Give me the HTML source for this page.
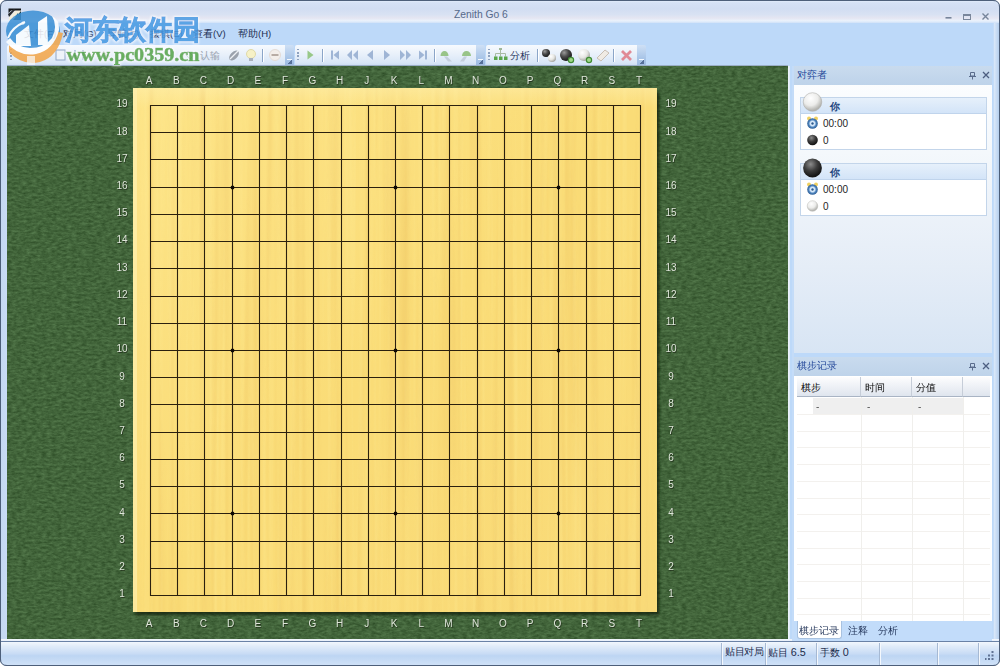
<!DOCTYPE html>
<html><head><meta charset="utf-8">
<style>
*{margin:0;padding:0;box-sizing:border-box}
html,body{width:1000px;height:666px;overflow:hidden;background:#c4dbf6;font-family:"Liberation Sans",sans-serif}
.a{position:absolute}
#frame{position:absolute;left:0;top:0;width:1000px;height:666px;background:#bdd9f9}
#title{position:absolute;left:1px;top:1px;width:998px;height:22px;background:linear-gradient(#e0ebfa 0,#d5e1f5 8%,#d1ddf2 35%,#d9e2f3 62%,#e5e6f2 78%,#eaf2fc 90%,#cfe1f8 100%)}
#title .t{position:absolute;left:453px;top:8px;font-size:10.3px;color:#56698a}
#menu{position:absolute;left:1px;top:23px;width:998px;height:22px;background:#bdd9f9}
#menu span{position:absolute;top:5px;font-size:9.5px;color:#1c2e52;font-weight:500}
.bar{position:absolute;top:45px;height:21px;background:linear-gradient(#f7fafe,#e8f0fa 45%,#d8e6f7 85%,#c9daf0);border-radius:2px 0 0 2px}
.ovf{position:absolute;top:45px;width:9px;height:21px;background:linear-gradient(#cfe0f5,#aac6e8 60%,#9dbbe2);border-radius:0 2px 2px 0}
.ovf:after{content:"";position:absolute;left:2px;top:14px;width:5px;height:4px;border-top:1px solid #f4f8fd;background:linear-gradient(135deg,transparent 50%,#56709a 50%)}
.grip{position:absolute;top:49px;width:2px;height:12px;background:repeating-linear-gradient(#8ea2c0 0 1.5px,transparent 1.5px 3.2px)}
.tsep{position:absolute;top:49px;width:1px;height:13px;background:#8ba5c8;box-shadow:1px 0 0 #fff}
#green{position:absolute;left:7px;top:66px;width:781px;height:573px;box-shadow:inset 0 2px 2px rgba(170,200,160,0.25);background:#4b7441;overflow:hidden}
#status{position:absolute;left:1px;top:641px;width:998px;height:24px;background:linear-gradient(#f2f7fd 0,#dfebf9 20%,#c9dcf5 50%,#bdd5f3 60%,#cfe1f7 100%);border-top:1px solid #6a82a6}
#status span{position:absolute;top:4px;font-size:9.8px;color:#1c2c4c;font-weight:500}
.sep{position:absolute;top:1px;width:2px;height:22px;background:linear-gradient(90deg,#a6b9d3 0 1px,#f4f8fd 1px 2px)}
#p1{position:absolute;left:794px;top:66px;width:198px;height:287px;background:linear-gradient(#fdfeff 0,#f4f8fc 30%,#e5edf7 70%,#d8e5f4 100%)}
.phead{position:absolute;left:0;top:0;width:198px;height:19px;background:linear-gradient(#c9dbee,#bed3ea)}
.phead .t{position:absolute;left:3px;top:3px;font-size:9.5px;color:#24489a;font-weight:500}
.pin{position:absolute;top:6px;left:176px}
.card{position:absolute;left:6px;width:187px;height:53px;border:1px solid #c3d5ea;background:#fff}
.card .h{position:absolute;left:0;top:0;width:185px;height:16px;background:linear-gradient(#e6f0fb,#d3e4f8);border-bottom:1px solid #c0d4ec}
.card .n{position:absolute;left:29px;top:3px;font-size:9.8px;font-weight:bold;color:#23467e}
.card .r{position:absolute;left:22px;font-size:10px;color:#1e1e1e}
#p2{position:absolute;left:794px;top:357px;width:198px;height:283px;background:#fff}
#tbl{position:absolute;left:3px;top:20px;width:193px;height:244px;background:#fff;overflow:hidden}
.th{position:absolute;top:0;height:20px;background:linear-gradient(#fdfdfe,#eef1f6 50%,#dfe5ee);border-bottom:1px solid #a9b4c4;border-right:1px solid #c6cdd8;font-size:9.5px;color:#0a0a0a;padding:5px 0 0 4px;font-weight:500}
.vl{position:absolute;top:20px;width:1px;height:230px;background:#f0efec}
.hl{position:absolute;left:0;width:193px;height:1px;background:#f3f1ee}
#tabs{position:absolute;left:0;top:264px;width:198px;height:20px;background:#c2dcfa}
#tabs span{position:absolute;top:4px;font-size:9.8px;color:#1f3156;font-weight:500}
</style></head><body>
<div id="frame">
  <div id="title"><span class="t">Zenith Go 6</span>
    <svg class="a" style="left:938px;top:9px" width="60" height="12">
      <rect x="6.5" y="7" width="6" height="1.6" fill="#76849a"/>
      <rect x="24.5" y="4.5" width="7" height="5" fill="none" stroke="#7a879c" stroke-width="1"/>
      <rect x="24" y="4" width="8" height="2" fill="#7a879c"/>
      <path d="M43.5 3.5 L49.5 9.5 M49.5 3.5 L43.5 9.5" stroke="#76849a" stroke-width="1.4"/>
    </svg>
  </div>
  <div id="menu">
    <span style="left:23px">文件(F)</span>
    <span style="left:62px">对局(G)</span>
    <span style="left:106px">导航(T)</span>
    <span style="left:149px">摆棋(E)</span>
    <span style="left:192px">查看(V)</span>
    <span style="left:237px">帮助(H)</span>
  </div>
  <!-- toolbars -->
  <div class="bar" style="left:7px;width:279px"></div><div class="ovf" style="left:285px"></div>
  <div class="bar" style="left:295px;width:181px"></div><div class="ovf" style="left:476px"></div>
  <div class="bar" style="left:486px;width:151px"></div><div class="ovf" style="left:637px"></div>
  <div class="grip" style="left:10px"></div>
  <div class="grip" style="left:297px"></div>
  <div class="grip" style="left:488px"></div>
  <div class="tsep" style="left:262px"></div>
  <div class="tsep" style="left:322px"></div>
  <div class="tsep" style="left:434px"></div>
  <div class="tsep" style="left:537px"></div>
  <div class="tsep" style="left:613px"></div>
  <svg class="a" style="left:0;top:44px" width="660" height="22">
    <defs>
      <radialGradient id="gb" cx="35%" cy="30%" r="70%"><stop offset="0" stop-color="#9a9a9a"/><stop offset="0.5" stop-color="#4a4a4a"/><stop offset="1" stop-color="#1a1a1a"/></radialGradient>
      <radialGradient id="gw" cx="35%" cy="30%" r="70%"><stop offset="0" stop-color="#ffffff"/><stop offset="0.6" stop-color="#e6e6e2"/><stop offset="1" stop-color="#a8a8a4"/></radialGradient>
    </defs>
    <!-- tb1 icons (faint, partly behind watermark) -->
    <rect x="56" y="6" width="9" height="10" fill="#eef3fa" stroke="#8fa6c6"/>
    <path d="M75 6v10 M83 6v10" stroke="#9aaecb" stroke-width="1.5"/>
    <path d="M103 8 l6 5" stroke="#9db39a" stroke-width="2"/>
    <text x="200" y="15" font-size="9.5" fill="#9aa3b0">认输</text>
    <path d="M188 7 l5 5 l-3 3 l-5 -5z" fill="none" stroke="#b9c2cc"/>
    <ellipse cx="234" cy="11.5" rx="3.5" ry="6" transform="rotate(45 234 11.5)" fill="#9aa2ad"/>
    <path d="M230 15 l8 -8" stroke="#eef1f5" stroke-width="1.2"/>
    <circle cx="251" cy="10" r="4.5" fill="#f6f1c6" stroke="#e0d9a8"/>
    <rect x="249" y="14" width="4" height="3" fill="#a9b1bd"/>
    <circle cx="275" cy="11" r="5.5" fill="#f3eeea" stroke="#e4dcd6"/>
    <rect x="271.5" y="10" width="7" height="2" fill="#b8aca4"/>
    <!-- tb2 -->
    <path d="M307.5 6.5 L313.5 11 L307.5 15.5 Z" fill="#98c888"/>
    <path d="M332 6.5v9" stroke="#9fb5d5" stroke-width="2"/><path d="M339 6.5 L333.5 11 L339 15.5 Z" fill="#9fb5d5"/>
    <path d="M352 6 L347 11 L352 16 Z M358 6 L353 11 L358 16 Z" fill="#9fb5d5"/>
    <path d="M373 6 L367 11 L373 16 Z" fill="#9fb5d5"/>
    <path d="M384 6 L390 11 L384 16 Z" fill="#9fb5d5"/>
    <path d="M400 6 L405 11 L400 16 Z M406 6 L411 11 L406 16 Z" fill="#9fb5d5"/>
    <path d="M426 6.5v9" stroke="#9fb5d5" stroke-width="2"/><path d="M419 6.5 L424.5 11 L419 15.5 Z" fill="#9fb5d5"/>
    <path d="M440.5 12 a4 5 0 0 1 8 0 z" fill="#98c488"/><path d="M444 12.5 l3 0 l5 5 h-4z" fill="#c3cedd"/>
    <path d="M462 12 a4.5 5 0 0 1 9 0 z" fill="#98c488"/><path d="M464 12.5 l3 0 l-3 5 h-4z" fill="#c3cedd"/>
    <!-- tb3 -->
    <path d="M500.5 5 v4 M495.5 9.5 h10 M495.5 9.5 v3 M505.5 9.5 v3 M500.5 9.5 v3" stroke="#a9bba4" stroke-width="1"/>
    <rect x="499" y="4" width="3" height="2" fill="#9fb79a"/>
    <rect x="494" y="12.5" width="3.5" height="3.5" fill="#5aa64c"/><rect x="499" y="12.5" width="3.5" height="3.5" fill="#5aa64c"/><rect x="504" y="12.5" width="3.5" height="3.5" fill="#5aa64c"/>
    <text x="510" y="15" font-size="9.6" font-weight="500" fill="#1f3158">分析</text>
    <circle cx="546" cy="9" r="4" fill="url(#gb)"/><circle cx="552" cy="14" r="4" fill="url(#gw)"/>
    <circle cx="566" cy="11" r="6" fill="url(#gb)"/><circle cx="571" cy="16" r="2.6" fill="#9fd88a" stroke="#3f8a34" stroke-width="1.2"/>
    <circle cx="584" cy="11" r="6" fill="url(#gw)"/><circle cx="589" cy="16" r="2.6" fill="#9fd88a" stroke="#3f8a34" stroke-width="1.2"/>
    <path d="M597 14 L605 6 L609 9 L601 17 Z" fill="#f0ebe4" stroke="#c8beb4" stroke-width="1"/>
    <path d="M622 7 L631 16 M631 7 L622 16" stroke="#e08a96" stroke-width="2.8"/>
  </svg>
  <div class="a" style="left:7px;top:65px;width:781px;height:1px;background:#9aaec6"></div>
  <!-- left & right frame -->
  <div class="a" style="left:0;top:0;width:1px;height:666px;background:#4d5f7a"></div>
  <div class="a" style="left:999px;top:0;width:1px;height:666px;background:#4d5f7a"></div>
  <div class="a" style="left:0;top:0;width:1000px;height:1px;background:#4d5f7a"></div>
  <div class="a" style="left:0;top:665px;width:1000px;height:1px;background:#4d5f7a"></div>
  <div class="a" style="left:993px;top:23px;width:6px;height:618px;background:linear-gradient(90deg,#c4dcf8 0 1px,#dbe9fa 1px,#b5cfee)"></div>
  <div class="a" style="left:1px;top:23px;width:6px;height:618px;background:linear-gradient(90deg,#c4d8f3,#c8dbf4)"></div>
  <div class="a" style="left:1px;top:639px;width:998px;height:2px;background:linear-gradient(#f4f8fd,#e6eef9)"></div>

  <div id="green">
    <svg width="781" height="573" style="position:absolute;left:0;top:0">
      <filter id="felt" x="0" y="0" width="100%" height="100%" color-interpolation-filters="sRGB"><feTurbulence type="fractalNoise" baseFrequency="0.2 0.42" numOctaves="3" seed="5"/><feColorMatrix values="0.2 0 0 0 0.16  0.23 0 0 0 0.28  0.19 0 0 0 0.135  0 0 0 0 1"/></filter>
      <rect width="781" height="573" filter="url(#felt)"/>
    </svg>
  </div>
  <svg width="1000" height="666" style="position:absolute;left:0;top:0;will-change:transform">
    <defs>
      <linearGradient id="wood" x1="0" y1="0" x2="1" y2="1">
        <stop offset="0" stop-color="#fde488"/><stop offset="0.5" stop-color="#fadc77"/><stop offset="1" stop-color="#f9da78"/>
      </linearGradient>
      <filter id="grain" x="0" y="0" width="100%" height="100%" color-interpolation-filters="sRGB"><feTurbulence type="fractalNoise" baseFrequency="0.22 0.003" numOctaves="2" seed="4"/><feColorMatrix values="0 0 0 0 1  0 0 0 0 0.94  0 0 0 0 0.62  2.4 0 0 0 -1.1"/></filter>
      <filter id="grain2" x="0" y="0" width="100%" height="100%" color-interpolation-filters="sRGB"><feTurbulence type="fractalNoise" baseFrequency="0.12 0.002" numOctaves="2" seed="9"/><feColorMatrix values="0 0 0 0 0.85  0 0 0 0 0.62  0 0 0 0 0.25  2.2 0 0 0 -1.05"/></filter>
      <linearGradient id="topband" x1="0" y1="0" x2="0" y2="1"><stop offset="0" stop-color="#fff0b0" stop-opacity="0.5"/><stop offset="1" stop-color="#fff0b0" stop-opacity="0"/></linearGradient>
      <filter id="blur1" x="-5%" y="-5%" width="110%" height="110%"><feGaussianBlur stdDeviation="1.3"/></filter>
    </defs>
    <rect x="135.5" y="92" width="524" height="523" fill="#17220d" opacity="0.75" filter="url(#blur1)"/>
    <rect x="133" y="88" width="524" height="524" fill="url(#wood)"/>
    <rect x="133" y="88" width="524" height="524" filter="url(#grain)" opacity="0.25"/>
    <rect x="133" y="88" width="524" height="524" filter="url(#grain2)" opacity="0.2"/>
    <rect x="133" y="88" width="4" height="524" fill="#fff6c0" opacity="0.5"/>
    <rect x="133" y="88" width="524" height="20" fill="url(#topband)"/>
    <g stroke="#2b200e" stroke-width="1.1">
<line x1="150.50" y1="105.0" x2="150.50" y2="596.0"/>
<line x1="150.0" y1="105.50" x2="641.0" y2="105.50"/>
<line x1="177.50" y1="105.0" x2="177.50" y2="596.0"/>
<line x1="150.0" y1="132.50" x2="641.0" y2="132.50"/>
<line x1="204.50" y1="105.0" x2="204.50" y2="596.0"/>
<line x1="150.0" y1="159.50" x2="641.0" y2="159.50"/>
<line x1="232.50" y1="105.0" x2="232.50" y2="596.0"/>
<line x1="150.0" y1="187.50" x2="641.0" y2="187.50"/>
<line x1="259.50" y1="105.0" x2="259.50" y2="596.0"/>
<line x1="150.0" y1="214.50" x2="641.0" y2="214.50"/>
<line x1="286.50" y1="105.0" x2="286.50" y2="596.0"/>
<line x1="150.0" y1="241.50" x2="641.0" y2="241.50"/>
<line x1="313.50" y1="105.0" x2="313.50" y2="596.0"/>
<line x1="150.0" y1="268.50" x2="641.0" y2="268.50"/>
<line x1="341.50" y1="105.0" x2="341.50" y2="596.0"/>
<line x1="150.0" y1="296.50" x2="641.0" y2="296.50"/>
<line x1="368.50" y1="105.0" x2="368.50" y2="596.0"/>
<line x1="150.0" y1="323.50" x2="641.0" y2="323.50"/>
<line x1="395.50" y1="105.0" x2="395.50" y2="596.0"/>
<line x1="150.0" y1="350.50" x2="641.0" y2="350.50"/>
<line x1="422.50" y1="105.0" x2="422.50" y2="596.0"/>
<line x1="150.0" y1="377.50" x2="641.0" y2="377.50"/>
<line x1="449.50" y1="105.0" x2="449.50" y2="596.0"/>
<line x1="150.0" y1="404.50" x2="641.0" y2="404.50"/>
<line x1="477.50" y1="105.0" x2="477.50" y2="596.0"/>
<line x1="150.0" y1="432.50" x2="641.0" y2="432.50"/>
<line x1="504.50" y1="105.0" x2="504.50" y2="596.0"/>
<line x1="150.0" y1="459.50" x2="641.0" y2="459.50"/>
<line x1="531.50" y1="105.0" x2="531.50" y2="596.0"/>
<line x1="150.0" y1="486.50" x2="641.0" y2="486.50"/>
<line x1="558.50" y1="105.0" x2="558.50" y2="596.0"/>
<line x1="150.0" y1="513.50" x2="641.0" y2="513.50"/>
<line x1="586.50" y1="105.0" x2="586.50" y2="596.0"/>
<line x1="150.0" y1="541.50" x2="641.0" y2="541.50"/>
<line x1="613.50" y1="105.0" x2="613.50" y2="596.0"/>
<line x1="150.0" y1="568.50" x2="641.0" y2="568.50"/>
<line x1="640.50" y1="105.0" x2="640.50" y2="596.0"/>
<line x1="150.0" y1="595.50" x2="641.0" y2="595.50"/>
    </g>
    <g fill="#0e0904">
<circle cx="232.50" cy="187.50" r="1.9"/>
<circle cx="232.50" cy="350.50" r="1.9"/>
<circle cx="232.50" cy="513.50" r="1.9"/>
<circle cx="395.50" cy="187.50" r="1.9"/>
<circle cx="395.50" cy="350.50" r="1.9"/>
<circle cx="395.50" cy="513.50" r="1.9"/>
<circle cx="558.50" cy="187.50" r="1.9"/>
<circle cx="558.50" cy="350.50" r="1.9"/>
<circle cx="558.50" cy="513.50" r="1.9"/>
    </g>
    <g font-family="Liberation Sans" font-size="10" fill="#1f2a18" opacity="0.8" transform="translate(0.8,0.8)">
<text x="149.00" y="84" text-anchor="middle">A</text>
<text x="149.00" y="627" text-anchor="middle">A</text>
<text x="176.22" y="84" text-anchor="middle">B</text>
<text x="176.22" y="627" text-anchor="middle">B</text>
<text x="203.44" y="84" text-anchor="middle">C</text>
<text x="203.44" y="627" text-anchor="middle">C</text>
<text x="230.67" y="84" text-anchor="middle">D</text>
<text x="230.67" y="627" text-anchor="middle">D</text>
<text x="257.89" y="84" text-anchor="middle">E</text>
<text x="257.89" y="627" text-anchor="middle">E</text>
<text x="285.11" y="84" text-anchor="middle">F</text>
<text x="285.11" y="627" text-anchor="middle">F</text>
<text x="312.33" y="84" text-anchor="middle">G</text>
<text x="312.33" y="627" text-anchor="middle">G</text>
<text x="339.56" y="84" text-anchor="middle">H</text>
<text x="339.56" y="627" text-anchor="middle">H</text>
<text x="366.78" y="84" text-anchor="middle">J</text>
<text x="366.78" y="627" text-anchor="middle">J</text>
<text x="394.00" y="84" text-anchor="middle">K</text>
<text x="394.00" y="627" text-anchor="middle">K</text>
<text x="421.22" y="84" text-anchor="middle">L</text>
<text x="421.22" y="627" text-anchor="middle">L</text>
<text x="448.44" y="84" text-anchor="middle">M</text>
<text x="448.44" y="627" text-anchor="middle">M</text>
<text x="475.67" y="84" text-anchor="middle">N</text>
<text x="475.67" y="627" text-anchor="middle">N</text>
<text x="502.89" y="84" text-anchor="middle">O</text>
<text x="502.89" y="627" text-anchor="middle">O</text>
<text x="530.11" y="84" text-anchor="middle">P</text>
<text x="530.11" y="627" text-anchor="middle">P</text>
<text x="557.33" y="84" text-anchor="middle">Q</text>
<text x="557.33" y="627" text-anchor="middle">Q</text>
<text x="584.56" y="84" text-anchor="middle">R</text>
<text x="584.56" y="627" text-anchor="middle">R</text>
<text x="611.78" y="84" text-anchor="middle">S</text>
<text x="611.78" y="627" text-anchor="middle">S</text>
<text x="639.00" y="84" text-anchor="middle">T</text>
<text x="639.00" y="627" text-anchor="middle">T</text>
    </g>
    <g font-family="Liberation Sans" font-size="10" fill="#dfe6da">
<text x="149.00" y="84" text-anchor="middle">A</text>
<text x="149.00" y="627" text-anchor="middle">A</text>
<text x="176.22" y="84" text-anchor="middle">B</text>
<text x="176.22" y="627" text-anchor="middle">B</text>
<text x="203.44" y="84" text-anchor="middle">C</text>
<text x="203.44" y="627" text-anchor="middle">C</text>
<text x="230.67" y="84" text-anchor="middle">D</text>
<text x="230.67" y="627" text-anchor="middle">D</text>
<text x="257.89" y="84" text-anchor="middle">E</text>
<text x="257.89" y="627" text-anchor="middle">E</text>
<text x="285.11" y="84" text-anchor="middle">F</text>
<text x="285.11" y="627" text-anchor="middle">F</text>
<text x="312.33" y="84" text-anchor="middle">G</text>
<text x="312.33" y="627" text-anchor="middle">G</text>
<text x="339.56" y="84" text-anchor="middle">H</text>
<text x="339.56" y="627" text-anchor="middle">H</text>
<text x="366.78" y="84" text-anchor="middle">J</text>
<text x="366.78" y="627" text-anchor="middle">J</text>
<text x="394.00" y="84" text-anchor="middle">K</text>
<text x="394.00" y="627" text-anchor="middle">K</text>
<text x="421.22" y="84" text-anchor="middle">L</text>
<text x="421.22" y="627" text-anchor="middle">L</text>
<text x="448.44" y="84" text-anchor="middle">M</text>
<text x="448.44" y="627" text-anchor="middle">M</text>
<text x="475.67" y="84" text-anchor="middle">N</text>
<text x="475.67" y="627" text-anchor="middle">N</text>
<text x="502.89" y="84" text-anchor="middle">O</text>
<text x="502.89" y="627" text-anchor="middle">O</text>
<text x="530.11" y="84" text-anchor="middle">P</text>
<text x="530.11" y="627" text-anchor="middle">P</text>
<text x="557.33" y="84" text-anchor="middle">Q</text>
<text x="557.33" y="627" text-anchor="middle">Q</text>
<text x="584.56" y="84" text-anchor="middle">R</text>
<text x="584.56" y="627" text-anchor="middle">R</text>
<text x="611.78" y="84" text-anchor="middle">S</text>
<text x="611.78" y="627" text-anchor="middle">S</text>
<text x="639.00" y="84" text-anchor="middle">T</text>
<text x="639.00" y="627" text-anchor="middle">T</text>
    </g>
    <g font-family="Liberation Sans" font-size="10" fill="#1f2a18" opacity="0.8" transform="translate(0.8,0.8)">
<text x="122" y="107.30" text-anchor="middle">19</text>
<text x="671" y="107.30" text-anchor="middle">19</text>
<text x="122" y="134.52" text-anchor="middle">18</text>
<text x="671" y="134.52" text-anchor="middle">18</text>
<text x="122" y="161.74" text-anchor="middle">17</text>
<text x="671" y="161.74" text-anchor="middle">17</text>
<text x="122" y="188.97" text-anchor="middle">16</text>
<text x="671" y="188.97" text-anchor="middle">16</text>
<text x="122" y="216.19" text-anchor="middle">15</text>
<text x="671" y="216.19" text-anchor="middle">15</text>
<text x="122" y="243.41" text-anchor="middle">14</text>
<text x="671" y="243.41" text-anchor="middle">14</text>
<text x="122" y="270.63" text-anchor="middle">13</text>
<text x="671" y="270.63" text-anchor="middle">13</text>
<text x="122" y="297.86" text-anchor="middle">12</text>
<text x="671" y="297.86" text-anchor="middle">12</text>
<text x="122" y="325.08" text-anchor="middle">11</text>
<text x="671" y="325.08" text-anchor="middle">11</text>
<text x="122" y="352.30" text-anchor="middle">10</text>
<text x="671" y="352.30" text-anchor="middle">10</text>
<text x="122" y="379.52" text-anchor="middle">9</text>
<text x="671" y="379.52" text-anchor="middle">9</text>
<text x="122" y="406.74" text-anchor="middle">8</text>
<text x="671" y="406.74" text-anchor="middle">8</text>
<text x="122" y="433.97" text-anchor="middle">7</text>
<text x="671" y="433.97" text-anchor="middle">7</text>
<text x="122" y="461.19" text-anchor="middle">6</text>
<text x="671" y="461.19" text-anchor="middle">6</text>
<text x="122" y="488.41" text-anchor="middle">5</text>
<text x="671" y="488.41" text-anchor="middle">5</text>
<text x="122" y="515.63" text-anchor="middle">4</text>
<text x="671" y="515.63" text-anchor="middle">4</text>
<text x="122" y="542.86" text-anchor="middle">3</text>
<text x="671" y="542.86" text-anchor="middle">3</text>
<text x="122" y="570.08" text-anchor="middle">2</text>
<text x="671" y="570.08" text-anchor="middle">2</text>
<text x="122" y="597.30" text-anchor="middle">1</text>
<text x="671" y="597.30" text-anchor="middle">1</text>
    </g>
    <g font-family="Liberation Sans" font-size="10" fill="#dfe6da">
<text x="122" y="107.30" text-anchor="middle">19</text>
<text x="671" y="107.30" text-anchor="middle">19</text>
<text x="122" y="134.52" text-anchor="middle">18</text>
<text x="671" y="134.52" text-anchor="middle">18</text>
<text x="122" y="161.74" text-anchor="middle">17</text>
<text x="671" y="161.74" text-anchor="middle">17</text>
<text x="122" y="188.97" text-anchor="middle">16</text>
<text x="671" y="188.97" text-anchor="middle">16</text>
<text x="122" y="216.19" text-anchor="middle">15</text>
<text x="671" y="216.19" text-anchor="middle">15</text>
<text x="122" y="243.41" text-anchor="middle">14</text>
<text x="671" y="243.41" text-anchor="middle">14</text>
<text x="122" y="270.63" text-anchor="middle">13</text>
<text x="671" y="270.63" text-anchor="middle">13</text>
<text x="122" y="297.86" text-anchor="middle">12</text>
<text x="671" y="297.86" text-anchor="middle">12</text>
<text x="122" y="325.08" text-anchor="middle">11</text>
<text x="671" y="325.08" text-anchor="middle">11</text>
<text x="122" y="352.30" text-anchor="middle">10</text>
<text x="671" y="352.30" text-anchor="middle">10</text>
<text x="122" y="379.52" text-anchor="middle">9</text>
<text x="671" y="379.52" text-anchor="middle">9</text>
<text x="122" y="406.74" text-anchor="middle">8</text>
<text x="671" y="406.74" text-anchor="middle">8</text>
<text x="122" y="433.97" text-anchor="middle">7</text>
<text x="671" y="433.97" text-anchor="middle">7</text>
<text x="122" y="461.19" text-anchor="middle">6</text>
<text x="671" y="461.19" text-anchor="middle">6</text>
<text x="122" y="488.41" text-anchor="middle">5</text>
<text x="671" y="488.41" text-anchor="middle">5</text>
<text x="122" y="515.63" text-anchor="middle">4</text>
<text x="671" y="515.63" text-anchor="middle">4</text>
<text x="122" y="542.86" text-anchor="middle">3</text>
<text x="671" y="542.86" text-anchor="middle">3</text>
<text x="122" y="570.08" text-anchor="middle">2</text>
<text x="671" y="570.08" text-anchor="middle">2</text>
<text x="122" y="597.30" text-anchor="middle">1</text>
<text x="671" y="597.30" text-anchor="middle">1</text>
    </g>
  </svg>

  <div id="p1">
    <div class="phead"><span class="t">对弈者</span>
      <svg class="a" style="left:175px;top:5px" width="22" height="10">
        <path d="M1.5 1.5h4v3.5h-4z M0 5.5h7 M3.5 5.5v3" stroke="#5a6c8c" fill="none" stroke-width="1"/>
        <path d="M14 1 L20 7 M20 1 L14 7" stroke="#4c5e80" stroke-width="1.3"/>
      </svg>
    </div>
    <div class="card" style="top:31px"><div class="h"><span class="n">你</span></div>
      <span class="r" style="top:20px">00:00</span><span class="r" style="top:37px">0</span></div>
    <div class="card" style="top:97px"><div class="h"><span class="n">你</span></div>
      <span class="r" style="top:20px">00:00</span><span class="r" style="top:37px">0</span></div>
    <svg class="a" style="left:0;top:0" width="198" height="160">
      <defs>
        <radialGradient id="sb" cx="40%" cy="30%" r="65%"><stop offset="0" stop-color="#8c8c8c"/><stop offset="0.55" stop-color="#3c3c3c"/><stop offset="1" stop-color="#161616"/></radialGradient>
        <radialGradient id="sw" cx="40%" cy="30%" r="65%"><stop offset="0" stop-color="#ffffff"/><stop offset="0.6" stop-color="#ececea"/><stop offset="1" stop-color="#b4b4b0"/></radialGradient>
        <radialGradient id="ck" cx="50%" cy="50%" r="50%"><stop offset="0" stop-color="#ffffff"/><stop offset="0.45" stop-color="#cfe4f8"/><stop offset="0.7" stop-color="#4c82bc"/><stop offset="1" stop-color="#2f5f96"/></radialGradient>
      </defs>
      <circle cx="18.5" cy="36" r="9.3" fill="url(#sw)" stroke="#b0b0ac" stroke-width="0.6"/>
      <circle cx="18.5" cy="74" r="5.3" fill="url(#sb)"/>
      <circle cx="18.5" cy="102" r="9.4" fill="url(#sb)"/>
      <circle cx="18.5" cy="140" r="5.3" fill="url(#sw)" stroke="#bcbcb8" stroke-width="0.5"/>
      <g id="clk">
        <circle cx="15" cy="52.5" r="2" fill="#f0d060"/><circle cx="22" cy="52.5" r="2" fill="#f0d060"/>
        <circle cx="18.5" cy="57.5" r="5.3" fill="url(#ck)"/>
        <circle cx="18.5" cy="57.5" r="1.2" fill="#2a5a90"/>
      </g>
      <use href="#clk" y="66"/>
    </svg>
  </div>

  <div class="a" style="left:792px;top:66px;width:2px;height:575px;background:#c4dcf8"></div>
  <div class="a" style="left:788px;top:66px;width:2px;height:573px;background:linear-gradient(90deg,#f2f7fd,#dbe8f8)"></div>

  <div id="p2">
    <div class="phead"><span class="t">棋步记录</span>
      <svg class="a" style="left:175px;top:5px" width="22" height="10">
        <path d="M1.5 1.5h4v3.5h-4z M0 5.5h7 M3.5 5.5v3" stroke="#5a6c8c" fill="none" stroke-width="1"/>
        <path d="M14 1 L20 7 M20 1 L14 7" stroke="#4c5e80" stroke-width="1.3"/>
      </svg>
    </div>
    <div id="tbl">
      <div class="th" style="left:0;width:64px">棋步</div>
      <div class="th" style="left:64px;width:51px">时间</div>
      <div class="th" style="left:115px;width:51px">分值</div>
      <div class="th" style="left:166px;width:27px;border-right:0"></div>
      <div class="a" style="left:16px;top:21px;width:150px;height:16px;background:#efefef"></div>
      <span class="a" style="left:19px;top:23.5px;font-size:10px;color:#555">-</span>
      <span class="a" style="left:70px;top:23.5px;font-size:10px;color:#555">-</span>
      <span class="a" style="left:121px;top:23.5px;font-size:10px;color:#555">-</span>
<div class="hl" style="top:37.0px"></div>
<div class="hl" style="top:53.7px"></div>
<div class="hl" style="top:70.4px"></div>
<div class="hl" style="top:87.1px"></div>
<div class="hl" style="top:103.8px"></div>
<div class="hl" style="top:120.5px"></div>
<div class="hl" style="top:137.2px"></div>
<div class="hl" style="top:153.9px"></div>
<div class="hl" style="top:170.6px"></div>
<div class="hl" style="top:187.3px"></div>
<div class="hl" style="top:204.0px"></div>
<div class="hl" style="top:220.7px"></div>
<div class="hl" style="top:237.4px"></div>
<div class="hl" style="top:254.1px"></div>
<div class="vl" style="left:64px"></div>
<div class="vl" style="left:115px"></div>
<div class="vl" style="left:166px"></div>
    </div>
    <div id="tabs">
      <div class="a" style="left:3px;top:0;width:45px;height:18px;background:#fff;border:1px solid #a9c2e0;border-top:0;border-radius:0 0 3px 3px"></div>
      <span style="left:5px">棋步记录</span>
      <span style="left:54px">注释</span>
      <span style="left:84px">分析</span>
    </div>
  </div>

  <div id="status">
    <div class="sep" style="left:720px"></div>
    <div class="sep" style="left:764px"></div>
    <div class="sep" style="left:815px"></div>
    <div class="sep" style="left:878px"></div>
    <div class="sep" style="left:936px"></div>
    <div class="sep" style="left:977px"></div>
    <span style="left:724px;letter-spacing:-0.3px">贴目对局</span>
    <span style="left:767px">贴目 <i style="font-style:normal;font-size:10.8px">6.5</i></span>
    <span style="left:819px">手数 <i style="font-style:normal;font-size:10.8px">0</i></span>
    <svg class="a" style="left:983.5px;top:8.5px" width="12" height="12">
      <g fill="#5f7293"><rect x="6.5" y="0" width="2" height="2"/><rect x="3" y="3.5" width="2" height="2"/><rect x="6.5" y="3.5" width="2" height="2"/><rect x="-0.5" y="7" width="2" height="2"/><rect x="3" y="7" width="2" height="2"/><rect x="6.5" y="7" width="2" height="2"/></g>
    </svg>
  </div>

  <!-- app icon -->
  <svg class="a" style="left:8px;top:8px" width="14" height="13">
    <path d="M1 1 H13 V4 L6 12 H1 V9 L8 2 Z" fill="#f3eedc"/>
    <path d="M0.5 0.5 H13 V2.5 H3 L0.5 5 Z" fill="#16181a"/>
    <path d="M0 6 L6 1 L7 2 L1 9 Z" fill="#2a2e33"/>
    <path d="M13 3 V12 H5 Z" fill="#1b3a42"/>
    <path d="M10 5 V9 H7 Z" fill="#0e5a6e"/>
  </svg>
  <!-- watermark -->
  <svg class="a" style="left:0;top:0;opacity:0.85" width="210" height="70">
    <defs>
      <filter id="glow" x="-10%" y="-30%" width="120%" height="160%"><feMorphology operator="dilate" radius="1.2" in="SourceAlpha" result="d"/><feGaussianBlur in="d" stdDeviation="1" result="b"/><feFlood flood-color="#ffffff" flood-opacity="0.85"/><feComposite in2="b" operator="in" result="w"/><feMerge><feMergeNode in="w"/><feMergeNode in="SourceGraphic"/></feMerge></filter>
    </defs>
    <g>
      <ellipse cx="33" cy="31" rx="27" ry="20.5" fill="#3a8fd4"/>
      <path d="M9 52 Q22 66 40 62 Q58 57 63 33 L58 32 Q52 50 36 53 Q20 55 9 44 Z" fill="#f2a446"/>
      <path d="M6 42 Q18 57 36 54 Q54 50 59 30 Q60 20 52 16 Q58 26 52 38 Q44 48 30 48 Q16 47 10 38 Z" fill="#ffffff"/>
      <path d="M8 38 Q12 27 25 22" stroke="#fff" stroke-width="2" fill="none"/>
      <path d="M16 46 L16 35 L29 25 L31 46 Z" fill="#fff"/>
      <path d="M38 45 L38 22 L47 16 L48 45 Z" fill="#fff"/>
      <path d="M48 24 Q57 30 49 40 Z" fill="#3a8fd4"/>
      <path d="M27 56 L35 56 L35 65 L27 65 Z" fill="#fff" opacity="0.7"/>
      <circle cx="23" cy="23" r="1.5" fill="#fff"/>
    </g>
    <g filter="url(#glow)">
      <text x="65" y="39" font-family="Liberation Sans" font-weight="900" font-size="26.5" fill="#4799e2" stroke="#4799e2" stroke-width="1">河东软件园</text>
      <text x="66.5" y="61" font-family="Liberation Serif" font-weight="bold" font-size="18" fill="#52a444" stroke="#52a444" stroke-width="0.6" textLength="133" lengthAdjust="spacingAndGlyphs">www.pc0359.cn</text>
    </g>
  </svg>
  <svg class="a" style="left:0;top:0" width="8" height="8"><path d="M0 0 H7 Q1 0 0 7 Z" fill="#ffffff"/><path d="M7 0.5 Q0.5 0.5 0.5 7" stroke="#4d5f7a" fill="none"/></svg>
  <svg class="a" style="left:992px;top:0" width="8" height="8"><path d="M8 0 H1 Q7 0 8 7 Z" fill="#ffffff"/><path d="M1 0.5 Q7.5 0.5 7.5 7" stroke="#4d5f7a" fill="none"/></svg>
  <svg class="a" style="left:0;top:659px" width="7" height="7"><path d="M0 7 V0 Q0 6 7 7 Z" fill="#ffffff"/><path d="M0.5 0 Q0.5 6.5 7 6.5" stroke="#4d5f7a" fill="none"/></svg>
  <svg class="a" style="left:993px;top:659px" width="7" height="7"><path d="M7 7 V0 Q7 6 0 7 Z" fill="#ffffff"/><path d="M6.5 0 Q6.5 6.5 0 6.5" stroke="#4d5f7a" fill="none"/></svg>
</div>
</body></html>
